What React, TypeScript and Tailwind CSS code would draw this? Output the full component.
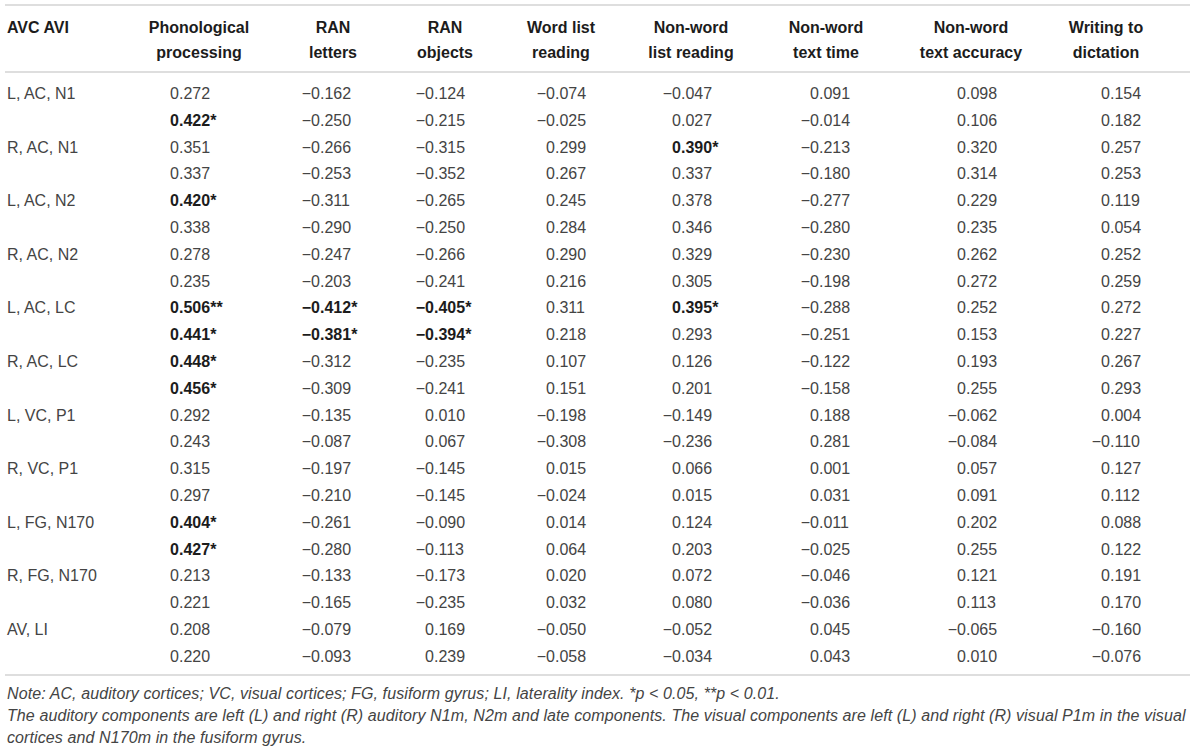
type Cell = string;

const headers: string[][] = [
  ["AVC AVI"],
  ["Phonological", "processing"],
  ["RAN", "letters"],
  ["RAN", "objects"],
  ["Word list", "reading"],
  ["Non-word", "list reading"],
  ["Non-word", "text time"],
  ["Non-word", "text accuracy"],
  ["Writing to", "dictation"],
];

// bold values end with "!" in the data below
const rows: [string, Cell[]][] = [
  ["L, AC, N1", ["0.272", "−0.162", "−0.124", "−0.074", "−0.047", "0.091", "0.098", "0.154"]],
  ["", ["0.422*!", "−0.250", "−0.215", "−0.025", "0.027", "−0.014", "0.106", "0.182"]],
  ["R, AC, N1", ["0.351", "−0.266", "−0.315", "0.299", "0.390*!", "−0.213", "0.320", "0.257"]],
  ["", ["0.337", "−0.253", "−0.352", "0.267", "0.337", "−0.180", "0.314", "0.253"]],
  ["L, AC, N2", ["0.420*!", "−0.311", "−0.265", "0.245", "0.378", "−0.277", "0.229", "0.119"]],
  ["", ["0.338", "−0.290", "−0.250", "0.284", "0.346", "−0.280", "0.235", "0.054"]],
  ["R, AC, N2", ["0.278", "−0.247", "−0.266", "0.290", "0.329", "−0.230", "0.262", "0.252"]],
  ["", ["0.235", "−0.203", "−0.241", "0.216", "0.305", "−0.198", "0.272", "0.259"]],
  ["L, AC, LC", ["0.506**!", "−0.412*!", "−0.405*!", "0.311", "0.395*!", "−0.288", "0.252", "0.272"]],
  ["", ["0.441*!", "−0.381*!", "−0.394*!", "0.218", "0.293", "−0.251", "0.153", "0.227"]],
  ["R, AC, LC", ["0.448*!", "−0.312", "−0.235", "0.107", "0.126", "−0.122", "0.193", "0.267"]],
  ["", ["0.456*!", "−0.309", "−0.241", "0.151", "0.201", "−0.158", "0.255", "0.293"]],
  ["L, VC, P1", ["0.292", "−0.135", "0.010", "−0.198", "−0.149", "0.188", "−0.062", "0.004"]],
  ["", ["0.243", "−0.087", "0.067", "−0.308", "−0.236", "0.281", "−0.084", "−0.110"]],
  ["R, VC, P1", ["0.315", "−0.197", "−0.145", "0.015", "0.066", "0.001", "0.057", "0.127"]],
  ["", ["0.297", "−0.210", "−0.145", "−0.024", "0.015", "0.031", "0.091", "0.112"]],
  ["L, FG, N170", ["0.404*!", "−0.261", "−0.090", "0.014", "0.124", "−0.011", "0.202", "0.088"]],
  ["", ["0.427*!", "−0.280", "−0.113", "0.064", "0.203", "−0.025", "0.255", "0.122"]],
  ["R, FG, N170", ["0.213", "−0.133", "−0.173", "0.020", "0.072", "−0.046", "0.121", "0.191"]],
  ["", ["0.221", "−0.165", "−0.235", "0.032", "0.080", "−0.036", "0.113", "0.170"]],
  ["AV, LI", ["0.208", "−0.079", "0.169", "−0.050", "−0.052", "0.045", "−0.065", "−0.160"]],
  ["", ["0.220", "−0.093", "0.239", "−0.058", "−0.034", "0.043", "0.010", "−0.076"]],
];

// left padding per value column so decimal points line up
const pads = ["pl-[27px]", "pl-[30px]", "pl-[14px]", "pl-[41px]", "pl-[29px]", "pl-[45px]", "pl-[44px]", "pl-[46px]"];

const grid = "grid grid-cols-[125px_138px_130px_94px_138px_122px_148px_142px_128px_1fr]";

const Value = ({ v, pad }: { v: string; pad: string }) => {
  const bold = v.endsWith("!");
  const clean = bold ? v.slice(0, -1) : v;
  const [int, frac] = clean.split(".");
  return (
    <div className={`${pad} flex ${bold ? "font-bold text-[#1c1c1c]" : ""}`}>
      <span className="w-[22px] text-right">{int}</span>
      <span>.{frac}</span>
    </div>
  );
};

export default function App() {
  return (
    <div className="w-[1200px] h-[747px] bg-white font-['Liberation_Sans',Arial,sans-serif] text-[16px] text-[#444]">
      <div className="ml-[5px] w-[1185px] pt-[4px]">
        <div className="h-[2px] bg-[#dedede]" />
        <div className={`${grid} pt-[9px] pb-[6px] leading-[25px] font-bold text-[#1c1c1c]`}>
          {headers.map((h, i) => (
            <div key={i} className={i === 0 ? "pl-[2px]" : "text-center"}>
              {h.map((line) => (
                <div key={line}>{line}</div>
              ))}
            </div>
          ))}
        </div>
        <div className="h-[2px] bg-[#dedede]" />
        <div className="pt-[8px] pb-[3px]">
          {rows.map(([label, vals], r) => (
            <div key={r} className={`${grid} h-[26.8px] leading-[26.8px]`}>
              <div className="pl-[2px]">{label}</div>
              {vals.map((v, c) => (
                <Value key={c} v={v} pad={pads[c]} />
              ))}
            </div>
          ))}
        </div>
        <div className="h-[2px] bg-[#dedede]" />
        <div className="pt-[7px] pl-[2px] italic text-[16px] leading-[22px] tracking-[0.1px] text-[#444]">
          <p>
            Note: AC, auditory cortices; VC, visual cortices; FG, fusiform gyrus; LI, laterality index. *p &lt; 0.05, **p &lt; 0.01.
          </p>
          <p>
            The auditory components are left (L) and right (R) auditory N1m, N2m and late components. The visual components are left (L) and right (R) visual P1m in the visual cortices and N170m in the fusiform gyrus.
          </p>
        </div>
      </div>
    </div>
  );
}
